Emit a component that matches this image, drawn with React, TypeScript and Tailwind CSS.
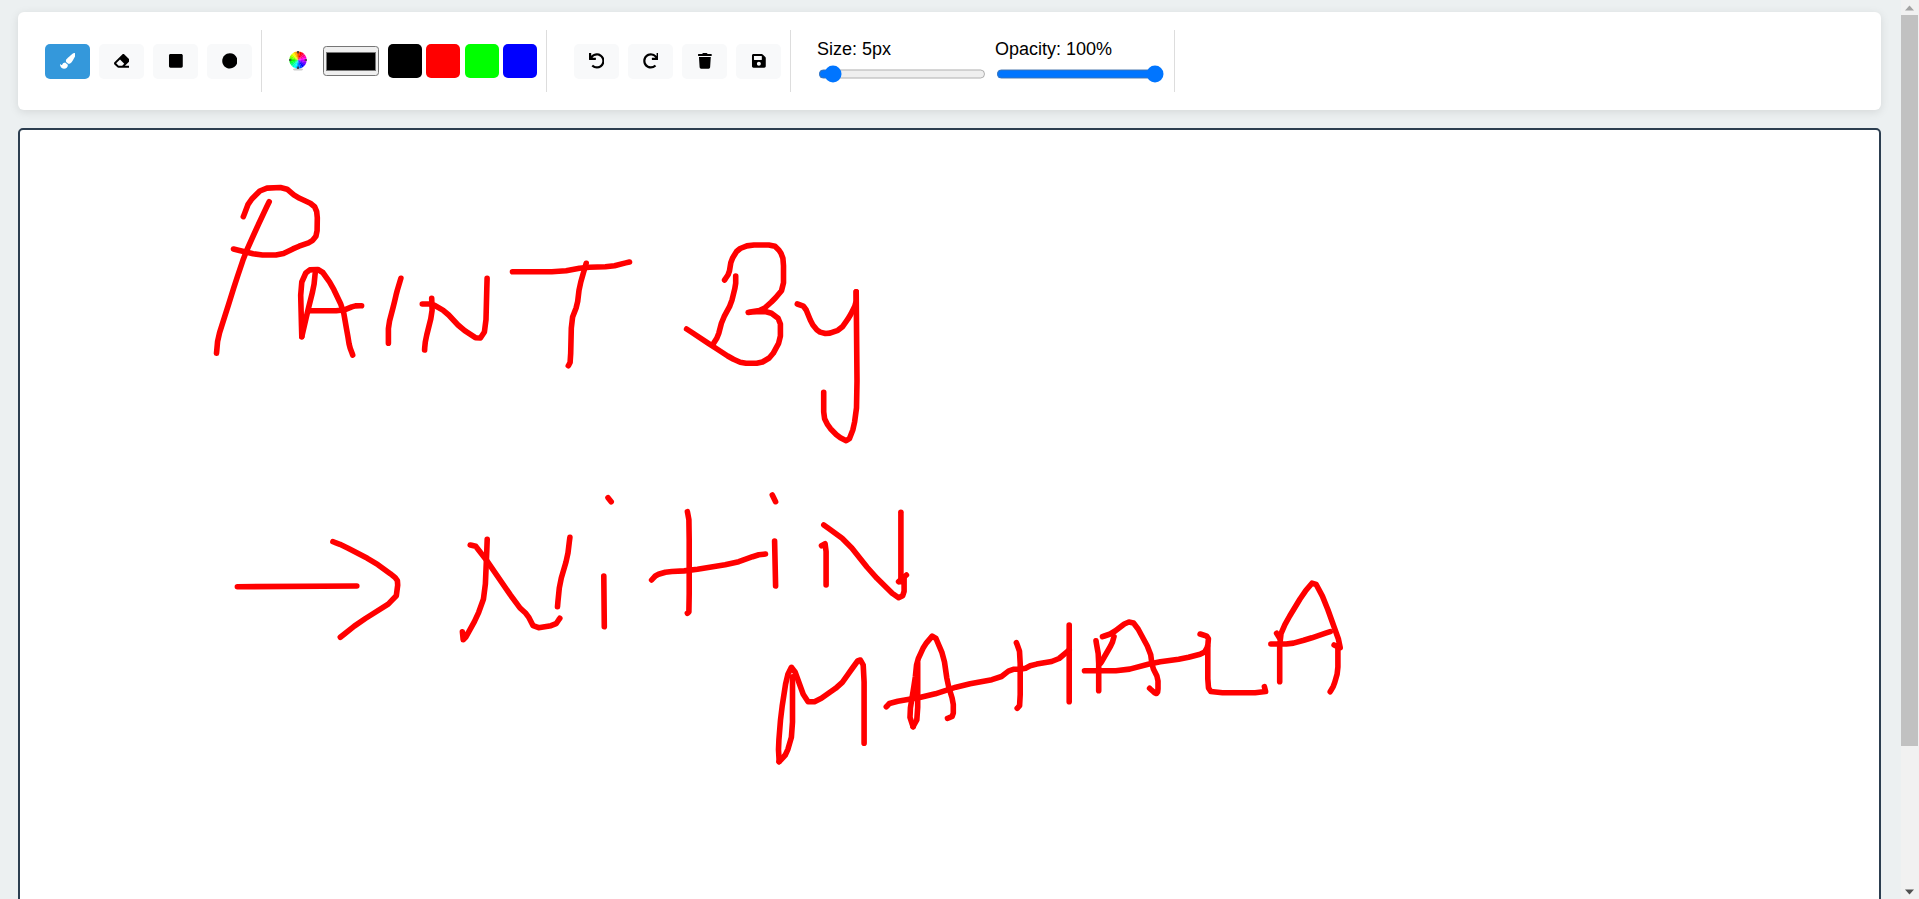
import React from "react";
import { FaPaintBrush, FaEraser, FaSquare, FaCircle, FaUndo, FaRedo, FaTrash, FaSave } from "react-icons/fa";

type P = [number, number];

const smooth = (pts: P[]): P[] => {
  if (pts.length < 3) return pts;
  const out: P[] = [pts[0]];
  for (let i = 0; i < pts.length - 1; i++) {
    const [x0, y0] = pts[i];
    const [x1, y1] = pts[i + 1];
    out.push([x0 + (x1 - x0) * 0.2, y0 + (y1 - y0) * 0.2]);
    out.push([x0 + (x1 - x0) * 0.8, y0 + (y1 - y0) * 0.8]);
  }
  out.push(pts[pts.length - 1]);
  return out;
};

const conv = (ox: number, oy: number, sx: number, sy: number) => (pts: P[]) =>
  smooth(pts).map(([x, y]) => `${(ox + x / sx).toFixed(1)},${(oy + y / sy).toFixed(1)}`).join(" ");
const a = conv(200, 170, 2.24, 3);
const b = conv(220, 480, 2.178, 3);
const c = conv(760, 570, 2.613, 3);

const strokes: string[] = [
  a([[97,140],[110,95],[140,55],[190,52],[215,80],[255,105],[263,130],[262,195],[250,215],[215,232],[180,255],[130,255],[75,237]]),
  a([[155,95],[125,180],[100,255],[80,335],[60,420],[40,505],[37,550]]),
  a([[228,500],[225,345],[240,300],[270,298],[295,345],[320,415],[330,490],[335,530],[342,555]]),
  a([[258,310],[255,350],[240,430],[228,500]]),
  a([[245,422],[320,422],[345,408],[362,407]]),
  a([[450,325],[440,370],[435,400],[422,465],[422,520]]),
  a([[503,540],[505,510],[520,430],[519,385]]),
  a([[498,402],[520,402],[550,425],[585,475],[625,510],[640,480],[643,325]]),
  a([[700,305],[810,305],[860,292],[920,290],[962,276]]),
  a([[865,280],[850,350],[845,405],[832,450],[830,575],[825,587]]),
  a([[1175,330],[1185,310],[1190,270],[1205,238],[1230,225],[1285,225],[1300,245],[1307,270],[1307,355],[1285,390],[1260,420],[1225,428],[1240,425],[1275,425],[1300,450],[1300,510],[1280,560],[1255,580],[1215,580],[1190,565],[1150,530],[1090,477]]),
  a([[1200,318],[1200,345],[1190,400],[1170,450],[1160,500],[1148,525]]),
  a([[1338,402],[1355,410],[1370,460],[1385,485],[1405,492],[1435,478],[1455,440],[1470,400],[1470,365]]),
  a([[1470,365],[1472,700],[1465,770],[1452,815],[1430,800],[1408,770],[1397,740],[1397,667]]),

  b([[38,320],[298,318]]),
  b([[246,185],[265,195],[335,245],[380,290],[388,305],[383,358],[300,430],[262,472]]),
  b([[528,455],[530,485],[560,410],[577,345],[582,178]]),
  b([[545,195],[560,200],[650,380],[670,405],[685,445],[730,435],[740,415]]),
  b([[762,172],[757,230],[740,310],[735,380]]),
  b([[836,288],[837,440]]),
  b([[845,53],[852,65]]),
  b([[1018,95],[1022,125],[1022,395],[1018,400]]),
  b([[940,300],[950,285],[975,275],[1020,272],[1120,250],[1170,225],[1188,222]]),
  b([[1208,183],[1210,318]]),
  b([[1203,45],[1210,65]]),
  b([[1310,197],[1320,190],[1320,315]]),
  b([[1315,135],[1365,185],[1420,280],[1475,355],[1490,345],[1490,290]]),
  b([[1478,305],[1495,285]]),
  b([[1483,97],[1483,305]]),

  c([[50,575],[48,530],[55,430],[70,320],[85,285],[120,395],[148,395],[210,345],[235,305],[260,265],[272,290],[272,520]]),
  c([[85,320],[85,490],[70,550],[50,575]]),
  c([[330,410],[340,398],[440,378],[530,345],[625,325],[655,298],[690,297],[710,285],[775,272],[808,240]]),
  c([[400,470],[390,435],[405,330],[410,275],[430,225],[455,192],[480,260],[490,340],[505,395],[505,438],[490,445]]),
  c([[400,470],[412,445],[412,280]]),
  c([[670,218],[680,250],[680,405],[672,415]]),
  c([[808,165],[808,395]]),
  c([[885,362],[885,260],[878,212]]),
  c([[848,302],[950,302],[1030,278],[1110,265],[1160,250],[1170,230],[1172,200],[1150,192]]),
  c([[1170,230],[1170,350],[1180,368],[1322,368],[1318,350]]),
  c([[895,200],[920,190],[960,155],[980,160],[1020,245],[1025,290],[1040,325],[1040,365],[1035,372],[1018,355]]),
  c([[890,280],[900,260],[920,220],[925,200]]),
  c([[1358,335],[1358,200],[1375,155],[1420,70],[1448,32],[1475,90],[1520,235],[1500,225]]),
  c([[1510,235],[1510,305],[1500,345],[1490,365]]),
  c([[1335,222],[1385,222],[1430,208],[1490,185]]),
  c([[1350,190],[1358,205]]),
];

function ToolButton({ children, active }: { children: React.ReactNode; active?: boolean }) {
  return (
    <button
      className={
        active
          ? "flex h-[35px] w-[45px] items-center justify-center rounded-[5px] bg-[#3498db] text-[15.75px] text-white"
          : "flex h-[35px] w-[45px] items-center justify-center rounded-[5px] bg-[#f8f9fa] text-[15.75px] text-black"
      }
    >
      {children}
    </button>
  );
}

function Swatch({ className }: { className: string }) {
  return <div className={"h-[34px] w-[34px] rounded-[5px] " + className} />;
}

function Wheel() {
  const n = 24;
  const r = 8.6;
  const sectors = Array.from({ length: n }, (_, i) => {
    const a0 = ((i / n) * 360 - 90) * (Math.PI / 180);
    const a1 = (((i + 1.1) / n) * 360 - 90) * (Math.PI / 180);
    const hue = (360 - (i / n) * 360 + 15) % 360;
    return {
      d: `M9 9 L${(9 + r * Math.cos(a0)).toFixed(2)} ${(9 + r * Math.sin(a0)).toFixed(2)} A${r} ${r} 0 0 1 ${(9 + r * Math.cos(a1)).toFixed(2)} ${(9 + r * Math.sin(a1)).toFixed(2)} Z`,
      fill: `hsl(${hue},100%,50%)`,
    };
  });
  return (
    <svg width="18" height="20" viewBox="0 0 18 20" className="mr-[16px] block">
      <ellipse cx="9" cy="18.4" rx="5" ry="1.2" fill="#cccccc" />
      {sectors.map((s, i) => (
        <path key={i} d={s.d} fill={s.fill} />
      ))}
      <rect x="8.2" y="0" width="1.6" height="2.4" fill="#333333" />
      <rect x="8.2" y="15.6" width="1.6" height="2.4" fill="#333333" />
      <rect x="0" y="8.2" width="2.4" height="1.6" fill="#444444" />
      <rect x="15.6" y="8.2" width="2.4" height="1.6" fill="#444444" />
    </svg>
  );
}

function ScrollBar() {
  return (
    <div className="flex h-[899px] w-[18px] shrink-0 flex-col bg-[#f1f1f1]">
      <div className="flex h-[15px] w-[17px] items-center justify-center">
        <svg width="9" height="6" viewBox="0 0 9 6" className="block">
          <polygon points="4.5,0.5 9,5.5 0,5.5" fill="#a3a3a3" />
        </svg>
      </div>
      <div className="h-[731px] w-[17px] bg-[#c1c1c1]" />
      <div className="flex-1" />
      <div className="flex h-[15px] w-[17px] items-center justify-center">
        <svg width="9" height="6" viewBox="0 0 9 6" className="block">
          <polygon points="0,0.5 9,0.5 4.5,5.5" fill="#505050" />
        </svg>
      </div>
    </div>
  );
}

export default function App() {
  return (
    <div className="flex h-[899px] overflow-hidden bg-[#ecf0f1] font-['Liberation_Sans',Arial,sans-serif]">
      <div className="min-w-0 flex-1 overflow-hidden pl-[18px] pr-[20px] pt-[12px]">
        <div className="flex h-[98px] items-center rounded-[6px] bg-white pl-[27px] shadow-[0_2px_10px_rgba(0,0,0,0.1)]">
          <div className="flex h-[62px] items-center gap-[9px] border-r border-[#dddddd] pr-[9px]">
            <ToolButton active><FaPaintBrush /></ToolButton>
            <ToolButton><FaEraser /></ToolButton>
            <ToolButton><FaSquare /></ToolButton>
            <ToolButton><FaCircle /></ToolButton>
          </div>
          <div className="ml-[27px] flex h-[62px] items-center border-r border-[#dddddd] pr-[9px]">
            <Wheel />
            <input
              type="color"
              defaultValue="#000000"
              className="h-[26.67px] w-[49.78px] rounded-[3px] border border-[#767676] bg-[#efefef] p-0 [zoom:1.125]"
            />
            <div className="ml-[9px] flex items-center gap-[4.33px]">
              <Swatch className="bg-[#000000]" />
              <Swatch className="bg-[#ff0000]" />
              <Swatch className="bg-[#00ff00]" />
              <Swatch className="bg-[#0000ff]" />
            </div>
          </div>
          <div className="ml-[27px] flex h-[62px] items-center gap-[9px] border-r border-[#dddddd] pr-[9px]">
            <ToolButton><FaUndo /></ToolButton>
            <ToolButton><FaRedo /></ToolButton>
            <ToolButton><FaTrash /></ToolButton>
            <ToolButton><FaSave /></ToolButton>
          </div>
          <div className="ml-[26px] flex h-[62px] items-center gap-[8px] border-r border-[#dddddd] pr-[9px]">
            <div className="flex w-[170px] flex-col gap-[6px]">
              <label className="text-[18px] leading-[20px] text-black">Size: 5px</label>
              <input type="range" min={1} max={100} defaultValue={5} className="ml-[1px] w-[149.3px] [zoom:1.125]" />
            </div>
            <div className="flex w-[170px] flex-col gap-[6px]">
              <label className="text-[18px] leading-[20px] text-black">Opacity: 100%</label>
              <input type="range" min={0} max={100} defaultValue={100} className="ml-[1px] w-[149.3px] [zoom:1.125]" />
            </div>
          </div>
        </div>
        <div className="mt-[18px] h-[900px] rounded-[5px] border-2 border-[#2c3e50] bg-white">
          <svg width="1859" height="896" viewBox="20 130 1859 896" className="block">
            {strokes.map((pts, i) => (
              <polyline key={i} points={pts} fill="none" stroke="#ff0000" strokeWidth="5.6" strokeLinecap="round" strokeLinejoin="round" />
            ))}
          </svg>
        </div>
      </div>
      <ScrollBar />
    </div>
  );
}
